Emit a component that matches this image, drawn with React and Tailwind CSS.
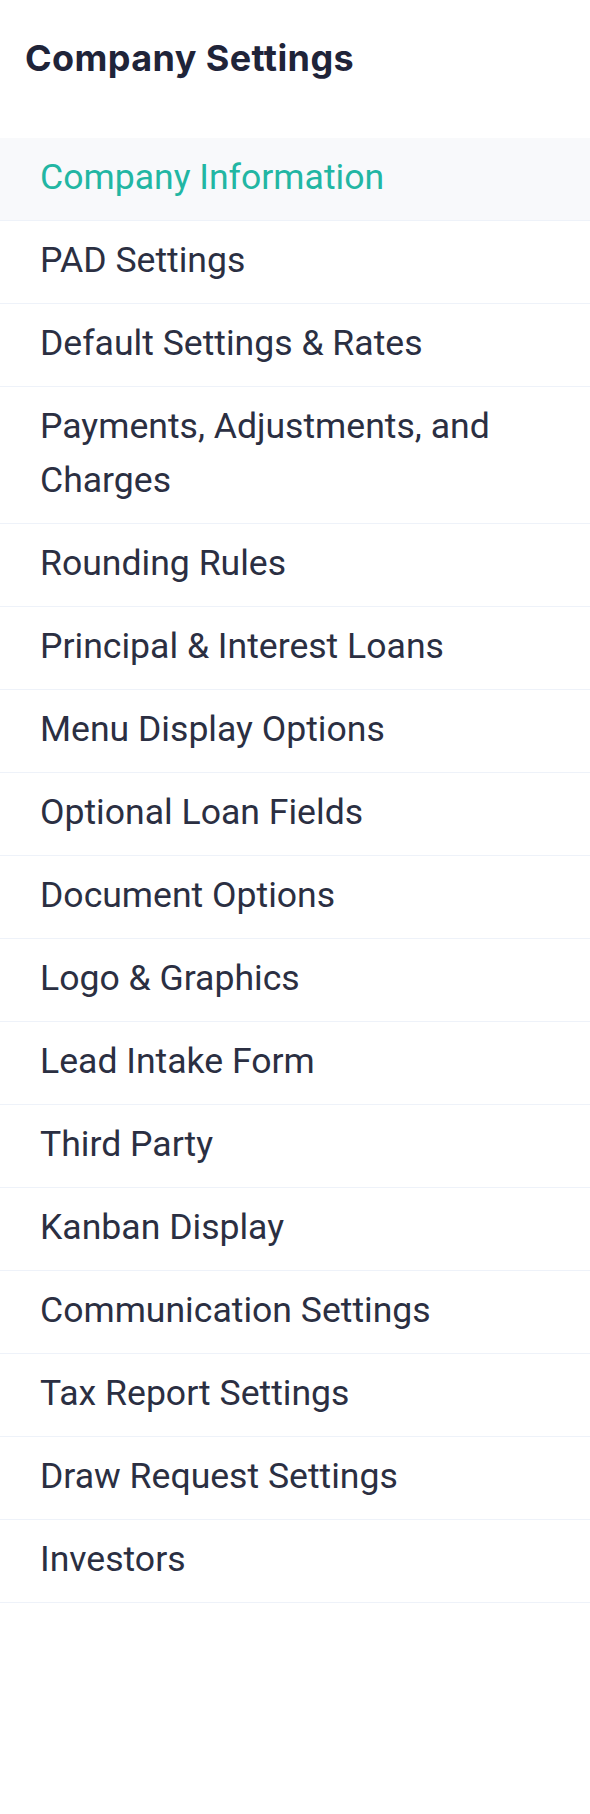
export default function App() {
  const items = [
    "Company Information",
    "PAD Settings",
    "Default Settings & Rates",
    "Payments, Adjustments, and Charges",
    "Rounding Rules",
    "Principal & Interest Loans",
    "Menu Display Options",
    "Optional Loan Fields",
    "Document Options",
    "Logo & Graphics",
    "Lead Intake Form",
    "Third Party",
    "Kanban Display",
    "Communication Settings",
    "Tax Report Settings",
    "Draw Request Settings",
    "Investors",
  ];
  return (
    <div className="w-[590px] min-h-[1814px] bg-white">
      <h1
        className="pl-[25px] pt-[36px] text-[36px] leading-[44px] tracking-[0.4px] font-bold text-[#1f2439]"
        style={{ fontFamily: "Inter, 'Noto Sans', sans-serif" }}
      >
        Company Settings
      </h1>
      <ul className="mt-[58px]" style={{ fontFamily: "Roboto, 'Noto Sans', sans-serif" }}>
        {items.map((label, i) => (
          <li
            key={label}
            className={
              i === 0
                ? "pl-[40px] pr-[40px] pt-[12px] pb-[16px] border-b border-[#eef2f9] bg-[#f8f9fb] text-[#22b6a3] text-[35.6px] leading-[54px]"
                : "pl-[40px] pr-[40px] pt-[12px] pb-[16px] border-b border-[#eef2f9] text-[#2b2f42] text-[35.6px] leading-[54px]"
            }
          >
            {label}
          </li>
        ))}
      </ul>
    </div>
  );
}
